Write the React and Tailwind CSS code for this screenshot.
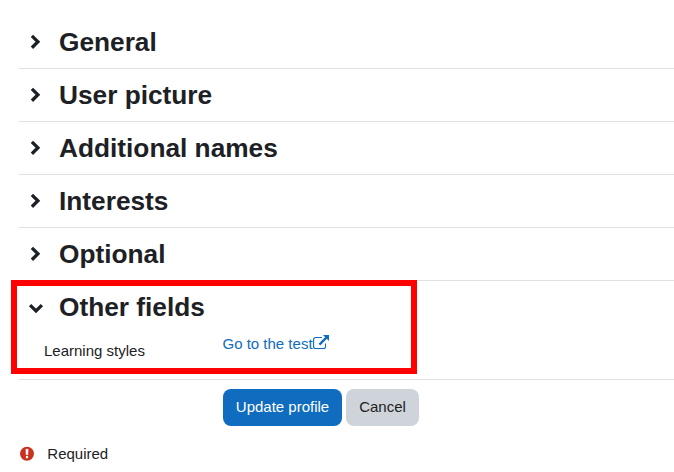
const sections = ["General", "User picture", "Additional names", "Interests", "Optional"];

function ChevronRight() {
  return (
    <svg className="h-4 w-4 shrink-0" viewBox="0 0 16 16" fill="none" stroke="#1d2125" strokeWidth="3.3">
      <path d="M3.9 1.9 L9.9 7.8 L3.9 13.7" />
    </svg>
  );
}

function ChevronDown() {
  return (
    <svg className="mt-0.5 h-4 w-4 shrink-0" viewBox="0 0 16 16" fill="none" stroke="#1d2125" strokeWidth="3.3">
      <path d="M2.1 5.1 L8 11 L13.9 5.1" />
    </svg>
  );
}

function ExternalLink() {
  return (
    <svg className="mt-0.5 h-4 w-4 shrink-0" viewBox="0 0 16 16" fill="none" stroke="#0f6cbf">
      <path d="M9 2.5 H2.7 Q0.6 2.5 0.6 4.6 V11.4 Q0.6 13.5 2.7 13.5 H10.4 Q12.5 13.5 12.5 11.4 V8.5" strokeWidth="1.1" />
      <path d="M6.4 9.6 L13.4 2.6" strokeWidth="2.3" />
      <path d="M10 0 H16 V6 Z" fill="#0f6cbf" stroke="none" />
    </svg>
  );
}

export default function App() {
  return (
    <main className="relative h-[472px] w-[674px] overflow-hidden bg-white pl-[19px] pt-4 font-['Liberation_Sans',Arial,sans-serif] text-[15px] leading-[22px] text-[#1d2125]">
      {sections.map((title) => (
        <section key={title} className="flex h-[53px] items-center border-b border-[#dee2e6] pl-[9px]">
          <ChevronRight />
          <h3 className="ml-[15px] text-[26.25px] font-bold leading-8">{title}</h3>
        </section>
      ))}
      <section className="h-[99px] border-b border-[#dee2e6]">
        <div className="flex h-[52px] items-center pl-[9px]">
          <ChevronDown />
          <h3 className="ml-[15px] text-[26.25px] font-bold leading-8">Other fields</h3>
        </div>
        <div className="flex items-start pl-[25px]">
          <span className="mt-[7px] w-[178.5px]">Learning styles</span>
          <a className="flex items-start text-[#0f6cbf]">
            Go to the test
            <ExternalLink />
          </a>
        </div>
      </section>
      <div className="ml-[204px] mt-[9px] flex gap-1">
        <button className="h-[37px] w-[119px] rounded-lg bg-[#0f6cbf] pb-0.5 text-white">Update profile</button>
        <button className="h-[37px] w-[73px] rounded-lg bg-[#ced4da] pb-0.5">Cancel</button>
      </div>
      <footer className="mt-[17px] flex items-center">
        <svg className="h-4 w-4" viewBox="0 0 16 16">
          <circle cx="8" cy="7.7" r="7" fill="#ca3120" />
          <path d="M6.9 3.2 H9.1 L8.9 8.8 H7.1 Z" fill="white" stroke="white" strokeWidth="0.5" strokeLinejoin="round" />
          <rect x="6.9" y="10" width="2.2" height="2.2" rx="0.3" fill="white" />
        </svg>
        <span className="ml-[12.3px]">Required</span>
      </footer>
      <div className="absolute left-[11px] top-[280px] h-[94px] w-[406px] border-[6px] border-[#ff0000]" />
    </main>
  );
}
